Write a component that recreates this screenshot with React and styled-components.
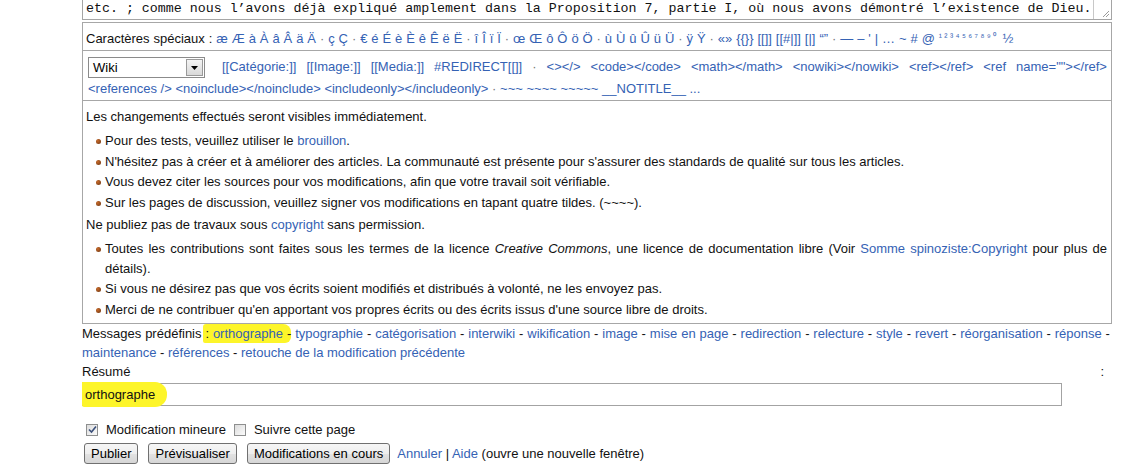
import React from 'react'
import styled, { createGlobalStyle } from 'styled-components'

const GlobalStyle = createGlobalStyle`
  body {
    margin: 0;
    background: #fff;
    font-family: "Liberation Sans", Arial, sans-serif;
    font-size: 13px;
    color: #111;
  }
`

const chars = [
  ['æ', 'Æ', 'à', 'À', 'â', 'Â', 'ä', 'Ä'],
  ['ç', 'Ç'],
  ['€', 'é', 'É', 'è', 'È', 'ê', 'Ê', 'ë', 'Ë'],
  ['î', 'Î', 'ï', 'Ï'],
  ['œ', 'Œ', 'ô', 'Ô', 'ö', 'Ö'],
  ['ù', 'Ù', 'û', 'Û', 'ü', 'Ü'],
  ['ÿ', 'Ÿ'],
  ['«»', '{{}}', '[[]]', '[[#|]]', '[|]', '“”'],
]
const tail = ['—', '–', "'", '|', '…', '~', '#', '@']
const digits = ['¹', '²', '³', '⁴', '⁵', '⁶', '⁷', '⁸', '⁹', '⁰']

const markup = ['[[Catégorie:]]', '[[Image:]]', '[[Media:]]', '#REDIRECT[[]]']
const tags = ['<></>', '<code></code>', '<math></math>', '<nowiki></nowiki>', '<ref></ref>', '<ref name=""></ref>', '<references\u00a0/>', '<noinclude></noinclude>', '<includeonly></includeonly>']
const sigs = ['~~~', '~~~~', '~~~~~', '__NOTITLE__', '...']

const presets = ['typographie', 'catégorisation', 'interwiki', 'wikification', 'image', 'mise en page', 'redirection', 'relecture', 'style', 'revert', 'réorganisation', 'réponse', 'maintenance', 'références', 'retouche de la modification précédente']

function App() {
  return (
    <Page>
      <GlobalStyle />
      <Editor>
        <EditorText>etc. ; comme nous l’avons déjà expliqué amplement dans la Proposition 7, partie I, où nous avons démontré l’existence de Dieu.</EditorText>
        <Grip>
          <svg width="10" height="10" viewBox="0 0 10 10">
            <path d="M9 3 L3 9 M9 6 L6 9" stroke="#9a9a9a" strokeWidth="1" />
          </svg>
        </Grip>
      </Editor>

      <Tools>
        <CharRow>
          Caractères spéciaux :{' '}
          {chars.map((group, gi) => (
            <React.Fragment key={gi}>
              {group.map((c, ci) => (
                <React.Fragment key={ci}>
                  <Link>{c}</Link>{' '}
                </React.Fragment>
              ))}
              <Dot>·</Dot>{' '}
            </React.Fragment>
          ))}
          {tail.map((c, ci) => (
            <React.Fragment key={ci}>
              <Link>{c}</Link>{' '}
            </React.Fragment>
          ))}
          {digits.map((d) => (
            <Sup key={d}>{d}</Sup>
          ))}{' '}
          <Link>½</Link>
        </CharRow>

        <MarkupRow>
          <Select>
            <span>Wiki</span>
            <SelectArrow>
              <svg width="7" height="4" viewBox="0 0 7 4"><path d="M0 0 H7 L3.5 4 Z" fill="#000" /></svg>
            </SelectArrow>
          </Select>{' '}
          {markup.map((m) => (
            <React.Fragment key={m}>
              <Link>{m}</Link>{' '}
            </React.Fragment>
          ))}
          <Dot>·</Dot>{' '}
          {tags.map((t) => (
            <React.Fragment key={t}>
              <Link>{t}</Link>{' '}
            </React.Fragment>
          ))}
          <Dot>·</Dot>{' '}
          {sigs.map((s) => (
            <React.Fragment key={s}>
              <Link>{s}</Link>{' '}
            </React.Fragment>
          ))}
        </MarkupRow>

        <Notice>
          <Para>Les changements effectués seront visibles immédiatement.</Para>
          <List>
            <li>Pour des tests, veuillez utiliser le <Link>brouillon</Link>.</li>
            <li>N'hésitez pas à créer et à améliorer des articles. La communauté est présente pour s'assurer des standards de qualité sur tous les articles.</li>
            <li>Vous devez citer les sources pour vos modifications, afin que votre travail soit vérifiable.</li>
            <li>Sur les pages de discussion, veuillez signer vos modifications en tapant quatre tildes. (~~~~).</li>
          </List>
          <Para>Ne publiez pas de travaux sous <Link>copyright</Link> sans permission.</Para>
          <List>
            <li>Toutes les contributions sont faites sous les termes de la licence <em>Creative Commons</em>, une licence de documentation libre (Voir <Link>Somme spinoziste:Copyright</Link> pour plus de détails).</li>
            <li>Si vous ne désirez pas que vos écrits soient modifiés et distribués à volonté, ne les envoyez pas.</li>
            <li>Merci de ne contribuer qu'en apportant vos propres écrits ou des écrits issus d'une source libre de droits.</li>
          </List>
        </Notice>
      </Tools>

      <Presets>
        Messages prédéfinis <Mark>: <Link>orthographe</Link> -</Mark>{' '}
        {presets.map((p, i) => (
          <React.Fragment key={p}>
            <Link>{p}</Link>{i < presets.length - 1 ? ' - ' : ''}
          </React.Fragment>
        ))}
      </Presets>

      <SummaryLabel>
        <span>Résumé</span>
        <span>:</span>
      </SummaryLabel>
      <SummaryField>
        <FieldMark>orthographe</FieldMark>
      </SummaryField>

      <Options>
        <Check>
          <svg width="9" height="9" viewBox="0 0 9 9"><path d="M1 4.5 L3.5 7 L8 1.5" stroke="#3a4f7a" strokeWidth="1.6" fill="none" /></svg>
        </Check>
        <span>Modification mineure</span>
        <Check />
        <span>Suivre cette page</span>
      </Options>

      <Actions>
        <Button>Publier</Button>
        <Button>Prévisualiser</Button>
        <Button>Modifications en cours</Button>
        <Trail>
          <Link>Annuler</Link> | <Link>Aide</Link> (ouvre une nouvelle fenêtre)
        </Trail>
      </Actions>
    </Page>
  )
}

export default App

const Page = styled.div`
  width: 1030px;
  padding-left: 82px;
`

const Editor = styled.div`
  display: flex;
  height: 19px;
  border: 1px solid #a5a5a5;
  border-top: none;
`

const EditorText = styled.div`
  flex: 1;
  padding: 0 3px;
  font-family: "Liberation Mono", "Courier New", monospace;
  font-size: 13.3px;
  line-height: 17px;
  white-space: nowrap;
  overflow: hidden;
`

const Grip = styled.div`
  width: 16px;
  border-left: 1px solid #c8c8c8;
  display: flex;
  align-items: flex-end;
  justify-content: flex-end;
  padding: 0 1px 1px 0;
`

const Tools = styled.div`
  margin-top: 2px;
  width: 1028px;
  border: 1px solid #a7a7a7;
`

const Link = styled.span`
  color: #3562b4;
`

const Dot = styled.span`
  color: #777;
`

const Sup = styled.span`
  color: #3562b4;
  font-size: 9.5px;
  vertical-align: 3px;
  margin-right: 2.4px;
`

const CharRow = styled.div`
  height: 27px;
  line-height: 27px;
  padding: 0 3px;
  white-space: nowrap;
  word-spacing: 0.3px;
  border-bottom: 1px solid #a7a7a7;
`

const MarkupRow = styled.div`
  padding: 5px 4px 0 5px;
  line-height: 22px;
  text-align: justify;
  border-bottom: 1px solid #a7a7a7;
`

const Select = styled.span`
  display: inline-flex;
  align-items: center;
  justify-content: space-between;
  vertical-align: middle;
  box-sizing: border-box;
  width: 117px;
  height: 21px;
  margin-right: 7px;
  padding: 0 1px 0 4px;
  border: 1px solid #8b8b8b;
  background: #fff;
  color: #000;
  font-size: 13px;
`

const SelectArrow = styled.span`
  display: flex;
  align-items: center;
  justify-content: center;
  width: 15px;
  height: 15px;
  border: 1px solid #9a9a9a;
  background: linear-gradient(#f4f4f4, #d9d9d9);
`

const Notice = styled.div`
  padding: 6px 4px 1px 3px;
  line-height: 20px;
`

const Para = styled.p`
  margin: 0 0 4px;
`

const List = styled.ul`
  margin: 0 0 2px;
  padding-left: 19px;
  list-style: none;
  text-align: justify;

  li {
    position: relative;
    margin-bottom: 0.5px;
  }

  li::before {
    content: "";
    position: absolute;
    left: -9px;
    top: 8px;
    width: 5px;
    height: 5px;
    border-radius: 50%;
    background: radial-gradient(circle at 35% 35%, #c86a2a, #6a3410);
  }
`

const Presets = styled.div`
  line-height: 19px;
  text-align: justify;
  width: 1028px;
`

const Mark = styled.span`
  background: #fdf52a;
  padding: 2px 0 2px 2px;
  margin-left: -2px;
  border-radius: 3px 8px 6px 2px;
`

const SummaryLabel = styled.div`
  display: flex;
  justify-content: space-between;
  width: 1022px;
  line-height: 19px;
`

const SummaryField = styled.div`
  margin-top: 2px;
  width: 978px;
  height: 21px;
  border: 1px solid #a3a3a3;
  display: flex;
  align-items: center;
`

const FieldMark = styled.span`
  display: flex;
  align-items: center;
  height: 25px;
  margin-left: -1px;
  padding: 0 12px 0 3px;
  background: #fdf52a;
  border-radius: 0 12px 12px 2px;
`

const Options = styled.div`
  display: flex;
  align-items: center;
  gap: 5px;
  margin-top: 14px;
  height: 20px;
  padding-left: 4px;

  span + span {
    margin-left: 3px;
  }
`

const Check = styled.span`
  display: inline-flex;
  align-items: center;
  justify-content: center;
  box-sizing: border-box;
  width: 12px;
  height: 12px;
  border: 1px solid #8e8f8f;
  background: linear-gradient(135deg, #dcdcdc, #fbfbfb);
`

const Actions = styled.div`
  display: flex;
  align-items: center;
  gap: 8px;
  margin-top: 3px;
  padding-left: 2px;
`

const Button = styled.span`
  box-sizing: border-box;
  height: 21px;
  padding: 0 6px;
  display: inline-flex;
  align-items: center;
  border: 1px solid #707070;
  border-radius: 3px;
  background: linear-gradient(#f6f6f6 0%, #eeeeee 50%, #e2e2e2 51%, #d6d6d6 100%);
  color: #000;

  & + & {
    margin-left: 2px;
  }
`

const Trail = styled.span`
  margin-left: -1px;
`
